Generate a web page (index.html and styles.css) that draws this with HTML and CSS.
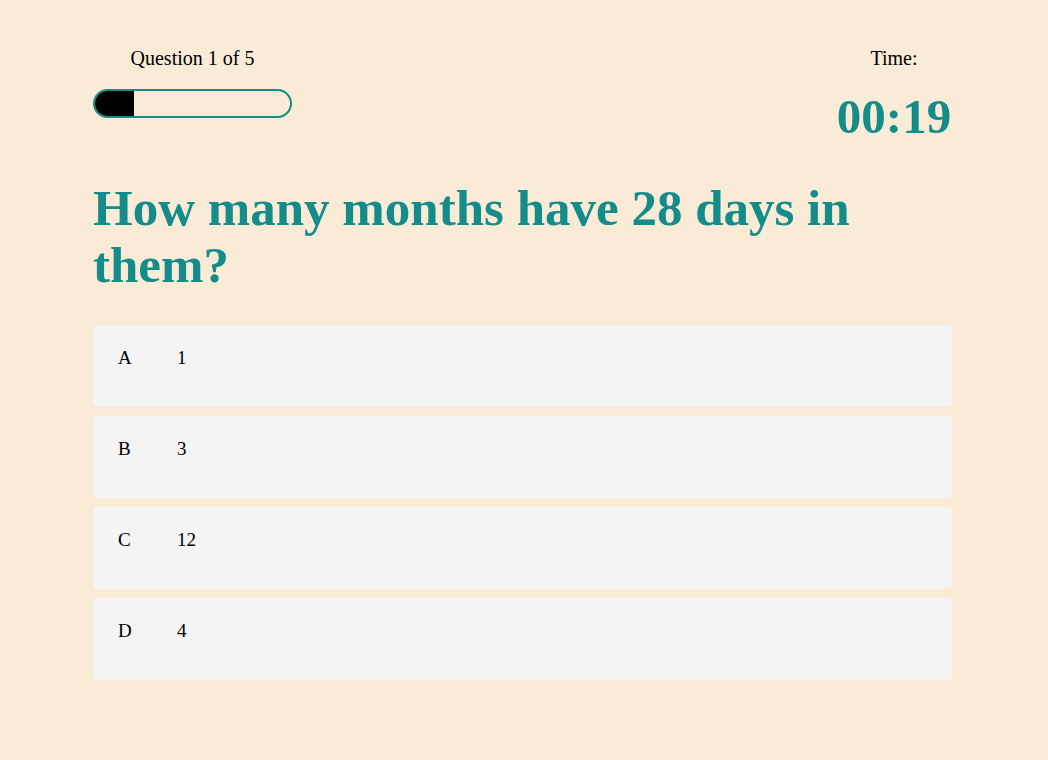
FILE: index.html
```html
<!DOCTYPE html>
<html lang="en">
<head>
<meta charset="utf-8">
<title>Quiz</title>
<link rel="stylesheet" href="styles.css">
</head>
<body>
<main class="quiz">
  <header class="quiz-header">
    <div class="progress-block">
      <p class="progress-label">Question 1 of 5</p>
      <div class="progress-bar"><div class="progress-fill" style="width:20%"></div></div>
    </div>
    <div class="timer-block">
      <p class="timer-label">Time:</p>
      <p class="timer-value">00:19</p>
    </div>
  </header>
  <h1 class="question">How many months have 28 days in them?</h1>
  <ul class="answers">
    <li class="answer"><span class="answer-key">A</span><span class="answer-text">1</span></li>
    <li class="answer"><span class="answer-key">B</span><span class="answer-text">3</span></li>
    <li class="answer"><span class="answer-key">C</span><span class="answer-text">12</span></li>
    <li class="answer"><span class="answer-key">D</span><span class="answer-text">4</span></li>
  </ul>
</main>
</body>
</html>
```
FILE: styles.css
```css
* { box-sizing: border-box; }
html, body { margin: 0; padding: 0; }
body {
  background: #faebd7;
  font-family: "Liberation Serif", "Times New Roman", serif;
  color: #000;
}
.quiz {
  width: 859px;
  margin: 0 0 0 93px;
  padding-top: 46px;
}
.quiz-header {
  display: flex;
  justify-content: space-between;
  align-items: flex-start;
}
.progress-block {
  width: 199px;
  text-align: center;
}
.progress-label, .timer-label {
  margin: 0;
  font-size: 20px;
  line-height: 24px;
}
.progress-bar {
  margin-top: 19px;
  height: 29px;
  border: 2px solid #148d8a;
  border-radius: 15px;
  overflow: hidden;
}
.progress-fill {
  height: 100%;
  background: #000;
}
.timer-block {
  width: 116px;
  text-align: center;
}
.timer-value {
  margin: 19px 0 0;
  font-size: 49px;
  line-height: 56px;
  font-weight: bold;
  color: #148d8a;
  white-space: nowrap;
}
.question {
  margin: 35px 0 0;
  font-size: 51px;
  line-height: 57px;
  font-weight: bold;
  color: #148d8a;
  width: 820px;
}
.answers {
  list-style: none;
  margin: 31px 0 0;
  padding: 0;
  display: flex;
  flex-direction: column;
  gap: 9px;
}
.answer {
  display: flex;
  height: 82px;
  background: #f4f4f4;
  border-radius: 5px;
  padding: 21px 25px 20px;
  font-size: 19px;
  line-height: 24px;
}
.answer-key {
  width: 59px;
}
```
